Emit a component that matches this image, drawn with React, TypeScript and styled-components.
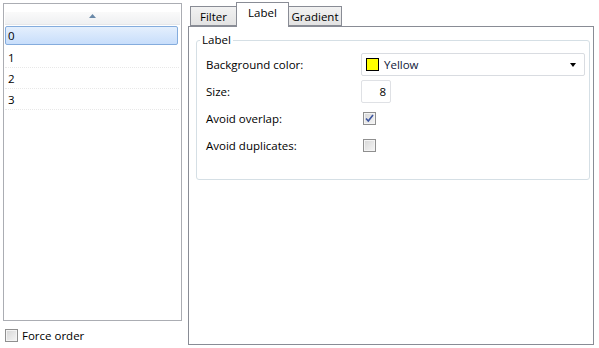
import React from "react";
import styled, { createGlobalStyle } from "styled-components";

const GlobalStyle = createGlobalStyle`
  html, body {
    margin: 0;
    padding: 0;
    background: #fff;
  }
  body {
    font-family: "Open Sans", "Noto Sans", sans-serif;
    font-size: 11.5px;
    color: #000;
  }
`;

const Page = styled.div`
  display: flex;
  width: 599px;
  height: 348px;
  box-sizing: border-box;
  padding: 2px 0 0 3px;
  overflow: hidden;
`;

const LeftColumn = styled.div`
  display: flex;
  flex-direction: column;
  width: 179px;
  margin-top: 1px;
`;

const ListBox = styled.div`
  height: 318px;
  box-sizing: border-box;
  border: 1px solid #abadb3;
  padding: 8px 1px 0 1px;
  display: flex;
  flex-direction: column;
`;

const ListHeader = styled.div`
  height: 13px;
  margin-bottom: 1px;
  background: linear-gradient(#fafafa, #eff0f2);
  border-bottom: 1px solid #e6e7ea;
  display: flex;
  justify-content: center;
  align-items: flex-start;
  padding-top: 2px;
  box-sizing: border-box;
`;

const ListRow = styled.div<{ $selected?: boolean }>`
  height: 21px;
  box-sizing: border-box;
  display: flex;
  align-items: center;
  padding-left: 3px;
  margin-right: 1px;
  border-bottom: 1px dotted #e8e8e8;
  ${(p) =>
    p.$selected &&
    `
    height: 19px;
    margin: 0 2px 2px 0;
    border: 1px solid #84acdd;
    border-radius: 2px;
    padding-left: 2px;
    background: linear-gradient(#e4effd, #c8defb);
  `}
`;

const CheckRow = styled.label`
  display: flex;
  align-items: center;
  gap: 4px;
  margin-top: 8px;
  margin-left: 2px;
  height: 13px;
`;

const Box = styled.span`
  width: 13px;
  height: 13px;
  box-sizing: border-box;
  border: 1px solid #8f8f8f;
  background: linear-gradient(135deg, #d6d6d6, #f6f6f6);
  box-shadow: inset 0 0 0 1px #f4f4f4;
  display: flex;
  align-items: center;
  justify-content: center;
  flex-shrink: 0;
`;

const RightColumn = styled.div`
  display: flex;
  flex-direction: column;
  width: 406px;
  margin-left: 6px;
`;

const TabBar = styled.div`
  display: flex;
  align-items: flex-end;
  height: 24px;
  padding-left: 2px;
`;

const Tab = styled.div<{ $active?: boolean; $w: number }>`
  width: ${(p) => p.$w}px;
  box-sizing: border-box;
  height: ${(p) => (p.$active ? 25 : 20)}px;
  margin-bottom: ${(p) => (p.$active ? -1 : 0)}px;
  border: 1px solid #898c95;
  border-bottom: ${(p) => (p.$active ? "none" : "1px solid #898c95")};
  background: ${(p) => (p.$active ? "#fff" : "linear-gradient(#f2f2f2, #e3e3e3)")};
  position: relative;
  z-index: ${(p) => (p.$active ? 1 : 0)};
  display: flex;
  justify-content: center;
  align-items: ${(p) => (p.$active ? "flex-start" : "center")};
  padding-top: ${(p) => (p.$active ? 2 : 0)}px;
  margin-left: ${(p) => (p.$active ? -1 : 0)}px;
  margin-right: ${(p) => (p.$active ? -1 : 0)}px;
`;

const TabPanel = styled.div`
  height: 319px;
  box-sizing: border-box;
  border: 1px solid #898c95;
  padding: 5px 3px 0 7px;
`;

const Group = styled.fieldset`
  margin: 0;
  border: 1px solid #d5dfe5;
  border-radius: 3px;
  padding: 5px 4px 22px 3px;
`;

const Legend = styled.legend`
  padding: 0 2px;
  line-height: 16px;
`;

const Form = styled.div`
  display: grid;
  grid-template-columns: 155px 1fr;
  grid-template-rows: repeat(4, 23px);
  row-gap: 4px;
  margin-left: 6px;
  align-items: center;
`;

const Combo = styled.div`
  height: 23px;
  box-sizing: border-box;
  border: 1px solid #d9dce1;
  border-radius: 2px;
  display: flex;
  align-items: center;
  padding: 0 8px 0 4px;
  color: #10203a;
`;

const Swatch = styled.span`
  width: 13px;
  height: 13px;
  box-sizing: border-box;
  border: 1px solid #000;
  background: #ffff00;
  margin-right: 5px;
`;

const Arrow = styled.span`
  margin-left: auto;
  width: 0;
  height: 0;
  border-left: 3.5px solid transparent;
  border-right: 3.5px solid transparent;
  border-top: 4px solid #000;
`;

const NumberBox = styled.div`
  width: 30px;
  height: 23px;
  box-sizing: border-box;
  border: 1px solid #dfe1e5;
  border-radius: 2px;
  display: flex;
  align-items: center;
  justify-content: flex-end;
  padding-right: 4px;
`;

const Cell = styled.div`
  display: flex;
  align-items: center;
  padding-left: 2px;
`;

const Check = ({ checked }: { checked?: boolean }) => (
  <Box>
    {checked && (
      <svg width="9" height="9" viewBox="0 0 9 9">
        <path d="M1 4.5 L3.3 7 L8 1" fill="none" stroke="#3d56a0" strokeWidth="1.6" />
      </svg>
    )}
  </Box>
);

export default function App() {
  return (
    <>
      <GlobalStyle />
      <Page>
        <LeftColumn>
          <ListBox>
            <ListHeader>
              <svg width="7" height="4" viewBox="0 0 7 4">
                <path d="M0 4 L3.5 0 L7 4 Z" fill="#6a89a8" />
              </svg>
            </ListHeader>
            <ListRow $selected>0</ListRow>
            <ListRow>1</ListRow>
            <ListRow>2</ListRow>
            <ListRow>3</ListRow>
          </ListBox>
          <CheckRow>
            <Check />
            Force order
          </CheckRow>
        </LeftColumn>
        <RightColumn>
          <TabBar>
            <Tab $w={47}>Filter</Tab>
            <Tab $w={53} $active>
              Label
            </Tab>
            <Tab $w={54}>Gradient</Tab>
          </TabBar>
          <TabPanel>
            <Group>
              <Legend>Label</Legend>
              <Form>
                <span>Background color:</span>
                <Combo>
                  <Swatch />
                  Yellow
                  <Arrow />
                </Combo>
                <span>Size:</span>
                <NumberBox>8</NumberBox>
                <span>Avoid overlap:</span>
                <Cell>
                  <Check checked />
                </Cell>
                <span>Avoid duplicates:</span>
                <Cell>
                  <Check />
                </Cell>
              </Form>
            </Group>
          </TabPanel>
        </RightColumn>
      </Page>
    </>
  );
}
